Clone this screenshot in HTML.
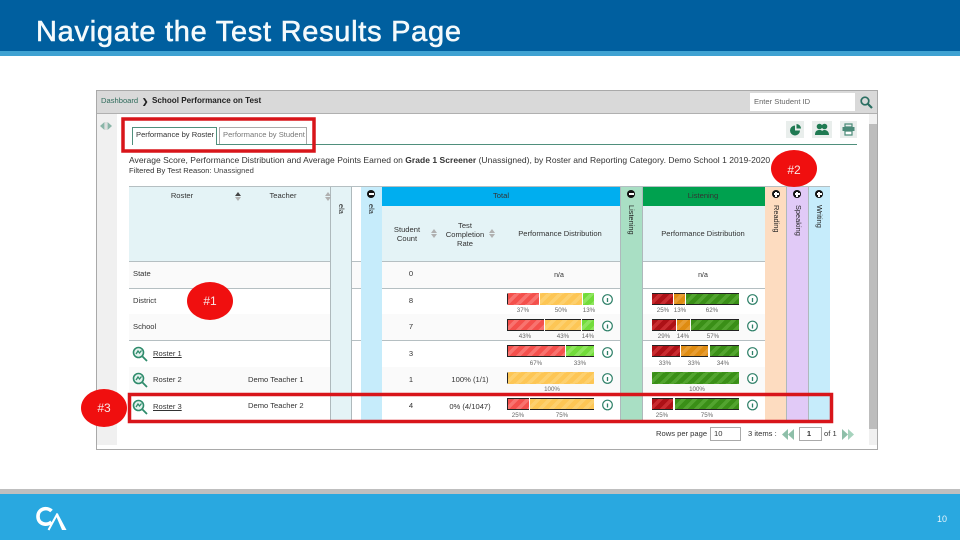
<!DOCTYPE html>
<html><head><meta charset="utf-8"><title>Navigate the Test Results Page</title>
<style>
html,body{margin:0;padding:0;background:#fff}
#p{position:relative;width:960px;height:540px;overflow:hidden;background:#fff;font-family:"Liberation Sans",sans-serif}
#p div,#p span.a{position:absolute}
.t{position:absolute;font-size:7.6px;line-height:10px;color:#333;white-space:nowrap;filter:blur(.3px)}
.c{transform:translateX(-50%);text-align:center}
.l{position:absolute;font-size:6.2px;line-height:7px;color:#666;white-space:nowrap;transform:translateX(-50%);filter:blur(.35px)}
.v{position:absolute;writing-mode:vertical-rl;font-size:7.4px;line-height:10px;color:#222;white-space:nowrap;filter:blur(.3px)}
.b{position:absolute;height:12px;box-sizing:border-box;border-top:1px solid #222;border-bottom:1px solid #222;filter:blur(.25px)}
.r{background:repeating-linear-gradient(135deg,#f4504c 0 4.5px,#f8736f 4.5px 8px)}
.y{background:repeating-linear-gradient(135deg,#fdc655 0 4.5px,#fdd06e 4.5px 8px)}
.g{background:repeating-linear-gradient(135deg,#72dc3a 0 4.5px,#8fe55f 4.5px 8px)}
.dr{background:repeating-linear-gradient(135deg,#ad1116 0 4.5px,#c92c30 4.5px 8px)}
.o{background:repeating-linear-gradient(135deg,#df8c12 0 4.5px,#e79d33 4.5px 8px)}
.dg{background:repeating-linear-gradient(135deg,#3a8f17 0 4.5px,#52a42f 4.5px 8px)}
.nb{border-color:transparent}
.hl{position:absolute;height:1px;background:#b5bfc2}
.o2{position:absolute;border-radius:50%;background:#f00f0f;color:#f8e8e8;font-size:12px;text-align:center}
.m{position:absolute;width:8px;height:8px;border-radius:50%;background:#111}
.m i{position:absolute;left:1.5px;top:3.2px;width:5px;height:1.6px;background:#fff}
.m.pl b{position:absolute;left:3.2px;top:1.5px;width:1.6px;height:5px;background:#fff}
.s{position:absolute;width:6px;height:10px}
.s:before{content:"";position:absolute;left:0;top:0;border:3px solid transparent;border-top:0;border-bottom:4px solid #b0b0b0}
.s:after{content:"";position:absolute;left:0;top:5px;border:3px solid transparent;border-bottom:0;border-top:4px solid #b0b0b0}
.s.k:before{border-bottom-color:#444}
</style></head><body>
<div id="p">
<!-- top band -->
<div style="left:0;top:0;width:960px;height:51px;background:#005f9f"></div>
<div style="left:0;top:51px;width:960px;height:5px;background:#3fa2d2"></div>
<div style="left:36px;top:15px;font-size:29px;line-height:34px;color:#f4fafc;white-space:nowrap;letter-spacing:.72px;-webkit-text-stroke:.55px #f4fafc">Navigate the Test Results Page</div>

<!-- panel -->
<div style="left:96px;top:90px;width:780px;height:358px;border:1px solid #a9a9a9;background:#fff"></div>
<div style="left:97px;top:91px;width:780px;height:22px;background:#d9d9d9;border-bottom:1px solid #b0b0b0"></div>
<div style="left:97px;top:114px;width:20px;height:331px;background:#f0f0f0"></div>
<span class="t" style="left:101px;top:96px;color:#2f6b5b">Dashboard</span>
<span class="t" style="left:142px;top:97px;font-weight:bold;color:#222">&#10095;</span>
<span class="t" style="left:152px;top:96px;font-weight:bold;color:#222;font-size:8.1px">School Performance on Test</span>
<div style="left:750px;top:93px;width:105px;height:18px;background:#fff"></div>
<span class="t" style="left:754px;top:97px;color:#666">Enter Student ID</span>
<svg style="position:absolute;left:859px;top:95px" width="15" height="15" viewBox="0 0 15 15"><circle cx="6" cy="6" r="3.8" fill="none" stroke="#2b6f62" stroke-width="1.7"/><path d="M9 9l4 4" stroke="#2b6f62" stroke-width="2.2"/></svg>
<!-- left arrows -->
<svg style="position:absolute;left:100px;top:122px" width="12" height="8" viewBox="0 0 12 8"><path d="M4.5 0v8L0 4z" fill="#8ab5a8"/><path d="M7.5 0v8L12 4z" fill="#8ab5a8"/><path d="M6 0v8" stroke="#ccc"/></svg>
<!-- scrollbar -->
<div style="left:869px;top:114px;width:8px;height:331px;background:#f0f0f0"></div>
<div style="left:869px;top:124px;width:8px;height:305px;background:#bdbdbd"></div>

<!-- tabs -->
<div style="left:132px;top:144px;width:725px;height:1px;background:#4f8f7c"></div>
<div style="left:132px;top:127px;width:85px;height:18px;box-sizing:border-box;border:1px solid #4f8f7c;border-bottom:0;background:#fff"></div>
<div style="left:219px;top:127px;width:88px;height:17px;box-sizing:border-box;border:1px solid #aaa;border-bottom:0;background:#fff"></div>
<span class="t" style="left:136px;top:130px;color:#333">Performance by Roster</span>
<span class="t" style="left:223px;top:130px;color:#777">Performance by Student</span>
<!-- tool buttons -->
<div style="left:786px;top:121px;width:18px;height:17px;background:#e9eeec"></div>
<div style="left:812px;top:121px;width:20px;height:17px;background:#e9eeec"></div>
<div style="left:840px;top:121px;width:17px;height:17px;background:#e9eeec"></div>
<svg style="position:absolute;left:788px;top:122px" width="15" height="15" viewBox="0 0 15 15"><path d="M7 3.5A5 5 0 1 0 12 8.5H7z" fill="#1f7a52"/><path d="M8.5 2v4.5H13A4.5 4.5 0 0 0 8.500 2z" fill="#1f7a52"/></svg>
<svg style="position:absolute;left:814px;top:122px" width="16" height="15" viewBox="0 0 16 15"><circle cx="5.500" cy="4.500" r="2.800" fill="#1f7a52"/><circle cx="10.500" cy="4.500" r="2.800" fill="#1f7a52"/><path d="M1 13c0-4 2-5 4.500-5S8 9 8 9s1-1 2.500-1S15 9 15 13z" fill="#1f7a52"/></svg>
<svg style="position:absolute;left:841px;top:122px" width="15" height="15" viewBox="0 0 15 15"><path d="M4 2h7v3H4z" fill="none" stroke="#4a8a78" stroke-width="1.200"/><path d="M1.500 5h12v4h-12z" fill="#4a8a78"/><path d="M4 9h7v4H4z" fill="#fff" stroke="#4a8a78" stroke-width="1.200"/></svg>

<!-- description -->
<span class="t" style="left:129px;top:155px;font-size:8.5px;letter-spacing:.03px">Average Score, Performance Distribution and Average Points Earned on <b>Grade 1 Screener</b> (Unassigned), by Roster and Reporting Category. Demo School 1 2019-2020</span>
<span class="t" style="left:129px;top:166px">Filtered By Test Reason: <span style="color:#444">Unassigned</span></span>

<!-- columns -->
<div style="left:129px;top:186px;width:201px;height:75px;background:#e4f3f6"></div>
<div style="left:330px;top:186px;width:22px;height:234px;box-sizing:border-box;border-left:1px solid #aeb9bc;border-right:1px solid #aeb9bc;background:#e4f3f6"></div>
<div style="left:361px;top:186px;width:21px;height:234px;background:#c6ecfb"></div>
<div style="left:382px;top:186px;width:238px;height:20px;background:#00aeef"></div>
<div style="left:382px;top:206px;width:238px;height:55px;background:#e4f3f6"></div>
<div style="left:620px;top:186px;width:23px;height:234px;box-sizing:border-box;border-left:1px solid #aeb9bc;border-right:1px solid #aeb9bc;background:#a9dfc4"></div>
<div style="left:643px;top:186px;width:122px;height:20px;background:#00a14f"></div>
<div style="left:643px;top:206px;width:122px;height:55px;background:#e4f3f6"></div>
<div style="left:765px;top:186px;width:21px;height:234px;background:#fddcc0"></div>
<div style="left:786px;top:186px;width:23px;height:234px;box-sizing:border-box;border-left:1px solid #aeb9bc;border-right:1px solid #aeb9bc;background:#e1caf7"></div>
<div style="left:809px;top:186px;width:21px;height:234px;background:#c6ecfb"></div>
<div class="hl" style="left:129px;top:186px;width:701px"></div>

<!-- row backgrounds -->
<div style="left:129px;top:262px;width:201px;height:26px;background:#fafafa"></div>
<div style="left:352px;top:262px;width:9px;height:26px;background:#fafafa"></div>
<div style="left:382px;top:262px;width:238px;height:26px;background:#fafafa"></div>
<div style="left:129px;top:314px;width:201px;height:26px;background:#fafafa"></div>
<div style="left:382px;top:314px;width:238px;height:26px;background:#fafafa"></div>
<div style="left:643px;top:314px;width:122px;height:26px;background:#fafafa"></div>
<div style="left:129px;top:367px;width:201px;height:26px;background:#fafafa"></div>
<div style="left:382px;top:367px;width:238px;height:26px;background:#fafafa"></div>
<div style="left:643px;top:367px;width:122px;height:26px;background:#fafafa"></div>
<!-- row lines -->
<div class="hl" style="left:129px;top:261px;width:201px"></div><div class="hl" style="left:352px;top:261px;width:9px"></div><div class="hl" style="left:382px;top:261px;width:238px"></div><div class="hl" style="left:643px;top:261px;width:122px"></div>
<div class="hl" style="left:129px;top:288px;width:201px"></div><div class="hl" style="left:352px;top:288px;width:9px"></div><div class="hl" style="left:382px;top:288px;width:238px"></div><div class="hl" style="left:643px;top:288px;width:122px"></div>
<div class="hl" style="left:129px;top:340px;width:201px"></div><div class="hl" style="left:352px;top:340px;width:9px"></div><div class="hl" style="left:382px;top:340px;width:238px"></div><div class="hl" style="left:643px;top:340px;width:122px"></div>

<!-- header text -->
<span class="t c" style="left:182px;top:191px">Roster</span>
<span class="t c" style="left:283px;top:191px">Teacher</span>
<span class="s k" style="left:235px;top:192px"></span>
<span class="s" style="left:325px;top:192px"></span>
<span class="v" style="left:336px;top:204px">ela</span>
<span class="v" style="left:366px;top:204px">ela</span>
<span class="t c" style="left:501px;top:191px">Total</span>
<span class="t c" style="left:703px;top:191px">Listening</span>
<span class="t c" style="left:407px;top:225px;line-height:9px">Student<br>Count</span>
<span class="s" style="left:431px;top:229px"></span>
<span class="t c" style="left:465px;top:221px;line-height:9px">Test<br>Completion<br>Rate</span>
<span class="s" style="left:489px;top:229px"></span>
<span class="t c" style="left:560px;top:229px">Performance Distribution</span>
<span class="t c" style="left:703px;top:229px">Performance Distribution</span>
<span class="v" style="left:626px;top:205px">Listening</span>
<span class="v" style="left:771px;top:205px">Reading</span>
<span class="v" style="left:793px;top:205px">Speaking</span>
<span class="v" style="left:814px;top:205px">Writing</span>
<span class="m" style="left:367px;top:190px"><i></i></span>
<span class="m" style="left:627px;top:190px"><i></i></span>
<span class="m pl" style="left:772px;top:190px"><i></i><b></b></span>
<span class="m pl" style="left:793px;top:190px"><i></i><b></b></span>
<span class="m pl" style="left:815px;top:190px"><i></i><b></b></span>

<!-- rows text -->
<span class="t" style="left:133px;top:269px">State</span>
<span class="t" style="left:133px;top:296px">District</span>
<span class="t" style="left:133px;top:322px">School</span>
<span class="t" style="left:153px;top:349px;text-decoration:underline">Roster 1</span>
<span class="t" style="left:153px;top:375px">Roster 2</span>
<span class="t" style="left:153px;top:402px;text-decoration:underline">Roster 3</span>
<span class="t" style="left:248px;top:375px">Demo Teacher 1</span>
<span class="t" style="left:248px;top:401px">Demo Teacher 2</span>
<span class="t c" style="left:411px;top:269px">0</span>
<span class="t c" style="left:411px;top:296px">8</span>
<span class="t c" style="left:411px;top:322px">7</span>
<span class="t c" style="left:411px;top:349px">3</span>
<span class="t c" style="left:411px;top:375px">1</span>
<span class="t c" style="left:411px;top:401px">4</span>
<span class="t c" style="left:470px;top:375px">100% (1/1)</span>
<span class="t c" style="left:470px;top:402px">0% (4/1047)</span>
<span class="t c" style="left:559px;top:271px;font-size:7px">n/a</span>
<span class="t c" style="left:703px;top:271px;font-size:7px">n/a</span>

<!-- magnifier icons -->
<svg style="position:absolute;left:132px;top:346px" width="16" height="16" viewBox="0 0 16 16"><circle cx="6.500" cy="6.500" r="5" fill="#e4f3ee" stroke="#2e8b6b" stroke-width="1.600"/><path d="M4 8l2-3 1.500 2L9.500 4.500" fill="none" stroke="#2e8b6b" stroke-width="1.300"/><path d="M10.500 10.500l4.500 4.500" stroke="#2e8b6b" stroke-width="1.800"/></svg>
<svg style="position:absolute;left:132px;top:372px" width="16" height="16" viewBox="0 0 16 16"><circle cx="6.500" cy="6.500" r="5" fill="#e4f3ee" stroke="#2e8b6b" stroke-width="1.600"/><path d="M4 8l2-3 1.500 2L9.500 4.500" fill="none" stroke="#2e8b6b" stroke-width="1.300"/><path d="M10.500 10.500l4.500 4.500" stroke="#2e8b6b" stroke-width="1.800"/></svg>
<svg style="position:absolute;left:132px;top:399px" width="16" height="16" viewBox="0 0 16 16"><circle cx="6.500" cy="6.500" r="5" fill="#e4f3ee" stroke="#2e8b6b" stroke-width="1.600"/><path d="M4 8l2-3 1.500 2L9.500 4.500" fill="none" stroke="#2e8b6b" stroke-width="1.300"/><path d="M10.500 10.500l4.500 4.500" stroke="#2e8b6b" stroke-width="1.800"/></svg>

<!-- total bars -->
<span class="b r nb" style="left:507px;top:293px;width:32px;border-left:1px solid #222"></span><span class="b y nb" style="left:540px;top:293px;width:42px"></span><span class="b g nb" style="left:583px;top:293px;width:11px"></span>
<span class="b r" style="left:507px;top:319px;width:37px;border-left:1px solid #222"></span><span class="b y" style="left:545px;top:319px;width:36px"></span><span class="b g" style="left:582px;top:319px;width:12px"></span>
<span class="b r" style="left:507px;top:345px;width:58px;border-left:1px solid #222"></span><span class="b g" style="left:566px;top:345px;width:28px"></span>
<span class="b y nb" style="left:507px;top:372px;width:87px;border-left:1px solid #222"></span>
<span class="b r" style="left:507px;top:398px;width:22px;border-left:1px solid #222"></span><span class="b y" style="left:530px;top:398px;width:64px"></span>
<!-- listening bars -->
<span class="b dr" style="left:652px;top:293px;width:21px"></span><span class="b o" style="left:674px;top:293px;width:11px"></span><span class="b dg" style="left:686px;top:293px;width:53px"></span>
<span class="b dr" style="left:652px;top:319px;width:24px"></span><span class="b o" style="left:677px;top:319px;width:13px"></span><span class="b dg" style="left:691px;top:319px;width:48px"></span>
<span class="b dr" style="left:652px;top:345px;width:28px"></span><span class="b o" style="left:681px;top:345px;width:27px"></span><span class="b dg" style="left:710px;top:345px;width:29px"></span>
<span class="b dg nb" style="left:652px;top:372px;width:87px"></span>
<span class="b dr" style="left:652px;top:398px;width:21px"></span><span class="b dg" style="left:675px;top:398px;width:64px"></span>

<!-- bar labels -->
<span class="l" style="left:523px;top:307px">37%</span><span class="l" style="left:561px;top:307px">50%</span><span class="l" style="left:589px;top:307px">13%</span>
<span class="l" style="left:525px;top:333px">43%</span><span class="l" style="left:563px;top:333px">43%</span><span class="l" style="left:588px;top:333px">14%</span>
<span class="l" style="left:536px;top:360px">67%</span><span class="l" style="left:580px;top:360px">33%</span>
<span class="l" style="left:552px;top:386px">100%</span>
<span class="l" style="left:518px;top:412px">25%</span><span class="l" style="left:562px;top:412px">75%</span>
<span class="l" style="left:663px;top:307px">25%</span><span class="l" style="left:680px;top:307px">13%</span><span class="l" style="left:712px;top:307px">62%</span>
<span class="l" style="left:664px;top:333px">29%</span><span class="l" style="left:683px;top:333px">14%</span><span class="l" style="left:713px;top:333px">57%</span>
<span class="l" style="left:665px;top:360px">33%</span><span class="l" style="left:694px;top:360px">33%</span><span class="l" style="left:723px;top:360px">34%</span>
<span class="l" style="left:697px;top:386px">100%</span>
<span class="l" style="left:662px;top:412px">25%</span><span class="l" style="left:707px;top:412px">75%</span>

<!-- info icons -->
<svg style="position:absolute;left:0;top:0;pointer-events:none" width="960" height="540">
<g fill="#fff" stroke="#2e8068" stroke-width="1.200">
<circle cx="607.500" cy="299.500" r="4.800"/><circle cx="607.500" cy="326" r="4.800"/><circle cx="607.500" cy="352.500" r="4.800"/><circle cx="607.500" cy="378.500" r="4.800"/><circle cx="607.500" cy="405" r="4.800"/>
<circle cx="752.500" cy="299.500" r="4.800"/><circle cx="752.500" cy="326" r="4.800"/><circle cx="752.500" cy="352.500" r="4.800"/><circle cx="752.500" cy="378.500" r="4.800"/><circle cx="752.500" cy="405" r="4.800"/>
</g>
<g stroke="#2e8068" stroke-width="1.300">
<path d="M607.500 298v4M607.500 324.500v4M607.500 351v4M607.500 377v4M607.500 403.500v4M752.500 298v4M752.500 324.500v4M752.500 351v4M752.500 377v4M752.500 403.500v4"/>
</g>
<!-- red rects -->
<rect x="123" y="119" width="191" height="32" fill="none" stroke="#d8151a" stroke-width="3.500"/>
<rect x="129.500" y="394.500" width="702" height="27" fill="none" stroke="#d8151a" stroke-width="3.500"/>
</svg>

<!-- pagination -->
<span class="t" style="left:656px;top:429px">Rows per page</span>
<div style="left:710px;top:427px;width:29px;height:12px;border:1px solid #aaa;background:#fff"></div>
<span class="t" style="left:714px;top:429px">10</span>
<span class="t" style="left:748px;top:429px">3 items :</span>
<svg style="position:absolute;left:782px;top:429px" width="12" height="11" viewBox="0 0 12 11"><path d="M6 0v11L0 5.500z" fill="#8ebfa9"/><path d="M12 0v11L6 5.500z" fill="#8ebfa9"/></svg>
<div style="left:799px;top:427px;width:21px;height:12px;border:1px solid #aaa;background:#fff"></div>
<span class="t c" style="left:809px;top:429px;font-weight:bold">1</span>
<span class="t" style="left:824px;top:429px">of 1</span>
<svg style="position:absolute;left:842px;top:429px" width="12" height="11" viewBox="0 0 12 11"><path d="M0 0v11L6 5.500z" fill="#8ebfa9"/><path d="M6 0v11L12 5.500z" fill="#a6d3bd"/></svg>

<!-- red callouts -->
<div class="o2" style="left:771px;top:150px;width:46px;height:37px;line-height:40px">#2</div>
<div class="o2" style="left:187px;top:282px;width:46px;height:38px;line-height:38px">#1</div>
<div class="o2" style="left:81px;top:389px;width:46px;height:38px;line-height:38px">#3</div>

<!-- footer -->
<div style="left:0;top:489px;width:960px;height:5px;background:#bfbfbf"></div>
<div style="left:0;top:494px;width:960px;height:46px;background:#29a8e0"></div>
<svg style="position:absolute;left:34px;top:504px" width="36" height="28" viewBox="0 0 36 28"><path d="M17.500 7C13 2.500 4 4.500 4 12.500S13 22 17.500 18" fill="none" stroke="#fff" stroke-width="3.600"/><path d="M14.500 26L23.500 9.500" fill="none" stroke="#fff" stroke-width="2"/><path d="M23.500 9L32.500 26H28L22.500 13z" fill="#fff"/></svg>
<span class="t" style="left:937px;top:514px;color:#e6f5fc;font-size:9px">10</span>
</div>
</body></html>
